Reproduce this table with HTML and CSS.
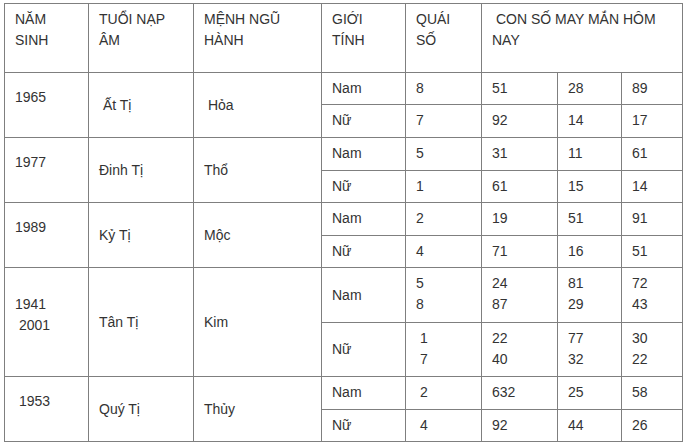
FILE: index.html
```html
<!DOCTYPE html>
<html lang="vi">
<head>
<meta charset="utf-8">
<title>Con số may mắn</title>
<link rel="stylesheet" href="styles.css">
</head>
<body>
<table class="lucky">
  <colgroup>
    <col class="c-year"><col class="c-tuoi"><col class="c-menh"><col class="c-gt">
    <col class="c-qs"><col class="c-n1"><col class="c-n2"><col class="c-n3">
  </colgroup>
  <tr class="r-head">
    <td>NĂM<br>SINH</td>
    <td>TUỔI NẠP<br>ÂM</td>
    <td>MỆNH NGŨ<br>HÀNH</td>
    <td>GIỚI<br>TÍNH</td>
    <td>QUÁI<br>SỐ</td>
    <td colspan="3">&nbsp;CON SỐ MAY MẮN HÔM<br>NAY</td>
  </tr>

  <tr class="r-32">
    <td rowspan="2" class="year">1965</td>
    <td rowspan="2" class="mid">&nbsp;Ất Tị</td>
    <td rowspan="2" class="mid">&nbsp;Hỏa</td>
    <td>Nam</td><td>8</td><td>51</td><td>28</td><td>89</td>
  </tr>
  <tr class="r-33">
    <td>Nữ</td><td>7</td><td>92</td><td>14</td><td>17</td>
  </tr>

  <tr class="r-33">
    <td rowspan="2" class="year">1977</td>
    <td rowspan="2" class="mid">Đinh Tị</td>
    <td rowspan="2" class="mid">Thổ</td>
    <td>Nam</td><td>5</td><td>31</td><td>11</td><td>61</td>
  </tr>
  <tr class="r-32">
    <td>Nữ</td><td>1</td><td>61</td><td>15</td><td>14</td>
  </tr>

  <tr class="r-33">
    <td rowspan="2" class="year">1989</td>
    <td rowspan="2" class="mid">Kỷ Tị</td>
    <td rowspan="2" class="mid">Mộc</td>
    <td>Nam</td><td>2</td><td>19</td><td>51</td><td>91</td>
  </tr>
  <tr class="r-32">
    <td>Nữ</td><td>4</td><td>71</td><td>16</td><td>51</td>
  </tr>

  <tr class="r-55">
    <td rowspan="2" class="year">1941<br>&nbsp;2001</td>
    <td rowspan="2" class="mid">Tân Tị</td>
    <td rowspan="2" class="mid">Kim</td>
    <td class="mid">Nam</td><td>5<br>8</td><td>24<br>87</td><td>81<br>29</td><td>72<br>43</td>
  </tr>
  <tr class="r-54">
    <td class="mid">Nữ</td><td>&nbsp;1<br>&nbsp;7</td><td>22<br>40</td><td>77<br>32</td><td>30<br>22</td>
  </tr>

  <tr class="r-33">
    <td rowspan="2" class="year">&nbsp;1953</td>
    <td rowspan="2" class="mid">Quý Tị</td>
    <td rowspan="2" class="mid">Thủy</td>
    <td>Nam</td><td>&nbsp;2</td><td>632</td><td>25</td><td>58</td>
  </tr>
  <tr class="r-32">
    <td>Nữ</td><td>&nbsp;4</td><td>92</td><td>44</td><td>26</td>
  </tr>
</table>
</body>
</html>
```

FILE: styles.css
```css
html, body {
  margin: 0;
  padding: 0;
  background: #ffffff;
}

body {
  padding: 3px 0 0 4px;
  font-family: "Liberation Sans", Arial, sans-serif;
  font-size: 14px;
  color: #333333;
}

.lucky {
  border-collapse: collapse;
  table-layout: fixed;
  width: 679px;
}

.c-year { width: 84px; }
.c-tuoi { width: 105px; }
.c-menh { width: 128px; }
.c-gt   { width: 84px; }
.c-qs   { width: 76px; }
.c-n1   { width: 76px; }
.c-n2   { width: 64px; }
.c-n3   { width: 61px; }

.lucky td {
  border: 1px solid #7f7f7f;
  padding: 5px 10px;
  line-height: 21px;
  vertical-align: top;
  white-space: nowrap;
}

.lucky td.mid {
  vertical-align: middle;
}

.lucky td.year {
  vertical-align: middle;
  padding-bottom: 20px;
}

.r-head { height: 69px; }
.r-32 { height: 32px; }
.r-33 { height: 33px; }
.r-55 { height: 55px; }
.r-54 { height: 54px; }
```
